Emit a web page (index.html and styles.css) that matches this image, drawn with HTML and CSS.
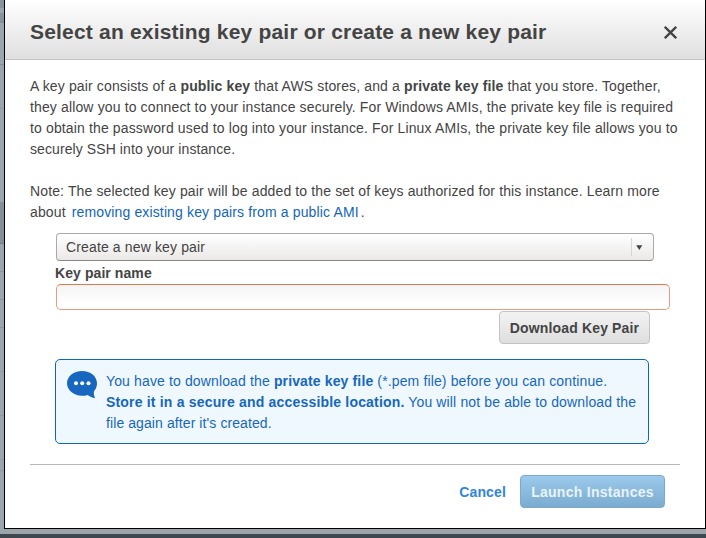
FILE: index.html
```html
<!DOCTYPE html>
<html lang="en">
<head>
<meta charset="utf-8">
<title>Key pair</title>
<link rel="stylesheet" href="styles.css">
</head>
<body>
<div class="modal">
  <header class="modal-header">
    <h1 class="title">Select an existing key pair or create a new key pair</h1>
    <svg class="close" width="13" height="13" viewBox="0 0 13 13"><path d="M.8 .8L12.2 12.2M12.2 .8L.8 12.2"/></svg>
  </header>
  <main class="modal-body">
    <p class="copy">
      <span class="line">A key pair consists of a <b>public key</b> that AWS stores, and a <b>private key file</b> that you store. Together,</span>
      <span class="line">they allow you to connect to your instance securely. For Windows AMIs, the private key file is required</span>
      <span class="line">to obtain the password used to log into your instance. For Linux AMIs, the private key file allows you to</span>
      <span class="line tight">securely SSH into your instance.</span>
    </p>
    <p class="copy">
      <span class="line">Note: The selected key pair will be added to the set of keys authorized for this instance. Learn more</span>
      <span class="line">about <a class="link">removing existing key pairs from a public AMI</a>.</span>
    </p>
    <div class="form">
      <div class="select">
        <span class="select-text">Create a new key pair</span>
        <span class="select-arrow"><svg width="7" height="5" viewBox="0 0 7 5"><path d="M.2 .2H6.3L3.25 4.9Z" fill="#444"/></svg></span>
      </div>
      <label class="label">Key pair name</label>
      <div class="input"></div>
      <div class="download-row"><button class="button">Download Key Pair</button></div>
      <div class="alert">
        <svg class="bubble" width="31" height="28" viewBox="0 0 31 28">
          <path fill="#1766bf" d="M15 0C23.500 0 30 5.300 30 12.200C30 15.200 29 18 27.100 20C26.400 22.500 27 24.800 28.200 27.200C25.200 26.600 22.700 25.400 20.600 23.900C18.900 24.500 17.100 24.800 15 24.800C6.800 24.800 0 19.200 0 12.300C0 5.300 6.800 0 15 0Z"/>
          <g fill="#fff"><circle cx="9" cy="12.300" r="2"/><circle cx="15.200" cy="12.300" r="2"/><circle cx="21.500" cy="12.300" r="2"/></g>
        </svg>
        <p class="alert-text">
          <span class="line">You have to download the <b>private key file</b> (*.pem file) before you can continue.</span>
          <span class="line"><b class="lead">Store it in a secure and accessible location.</b> You will not be able to download the</span>
          <span class="line tight">file again after it's created.</span>
        </p>
      </div>
    </div>
    <footer class="footer">
      <a class="cancel">Cancel</a>
      <button class="button primary">Launch Instances</button>
    </footer>
  </main>
</div>
</body>
</html>
```
FILE: styles.css
```css
* { box-sizing: border-box; }
body {
  margin: 0;
  height: 538px;
  overflow: hidden;
  padding: 0 0 0 4px;
  font: 14px/21px "Liberation Sans", Arial, sans-serif;
  letter-spacing: 0.135px;
  color: #444;
  background:
    linear-gradient(#3f464d, #3f464d) 0 534px / 706px 4px no-repeat,
    linear-gradient(#9ba3ab, #9ba3ab) 4px 529px / 702px 5px no-repeat,
    linear-gradient(
      #87949d 0 8px, #9ba5ad 8px 13px, #89939c 13px 22px, #808a93 22px 23px,
      #9ba5ad 23px 64px, #838e97 64px 65px, #9ba5ad 65px 108px, #929ca4 108px 109px,
      #9ba5ad 109px 202px, #858f97 202px 243px, #77818a 243px 244px,
      #9ba5ad 244px 271px, #8a949d 271px 272px, #9ba5ad 272px 299px, #8a949d 299px 300px,
      #9ba5ad 300px 327px, #8a949d 327px 328px, #9ba5ad 328px 371px, #8f99a2 371px 372px,
      #9ba5ad 372px 415px, #8f99a2 415px 416px, #9ba5ad 416px 459px, #8f99a2 459px 460px,
      #9ba5ad 460px 470px, #8f99a2 470px 471px, #9ba5ad 471px);
}
h1, p { margin: 0; }
.modal {
  width: 702px;
  height: 529px;
  background: #fff;
  border: 1px solid #000;
  border-top: 0;
}
.modal-header {
  display: flex;
  justify-content: space-between;
  align-items: center;
  height: 60px;
  padding: 4px 28px 0 25px;
  border-bottom: 1px solid #c4c4c4;
  background: linear-gradient(#fff, #dfdfdf);
}
.title { font-size: 21px; line-height: 24px; letter-spacing: 0.19px; white-space: nowrap; }
.close { stroke: #444; stroke-width: 2.300; fill: none; margin-top: 2px; }
.modal-body { padding: 16px 25px 0; }
.copy { margin-bottom: 21px; }
.copy + .copy { margin-bottom: 10px; }
.line { display: block; white-space: nowrap; }
.tight { letter-spacing: 0.09px; }
.link { color: #1166bb; margin: 0 2px; }
.form { padding-left: 25px; }
.select {
  display: flex;
  align-items: center;
  justify-content: space-between;
  width: 598px;
  height: 28px;
  margin-left: 1px;
  padding: 0 10px 0 9px;
  border: 1px solid #aaa;
  border-bottom-color: #888;
  border-radius: 4px;
  background: linear-gradient(#fff, #ebe9e8);
}
.select-arrow {
  display: flex;
  align-items: center;
  height: 18px;
  padding-left: 4px;
  border-left: 1px solid #d6d6d6;
}
.label { display: block; height: 23px; padding-top: 2px; font-weight: bold; letter-spacing: 0.08px; }
.input {
  width: 614px;
  height: 26px;
  margin-left: 1px;
  border: 1px solid #e59b80;
  border-top-color: #d97b52;
  border-radius: 5px;
  background: linear-gradient(#f4f4f4, #fff 75%);
}
.download-row { display: flex; justify-content: flex-end; padding: 1px 30px 0 0; }
.button {
  width: 151px;
  height: 33px;
  padding: 2px 0 0;
  font: bold 14px/21px "Liberation Sans", Arial, sans-serif;
  letter-spacing: 0.15px;
  white-space: nowrap;
  color: #444;
  border: 1px solid #c3c3c3;
  border-radius: 4px;
  background: linear-gradient(#f3f3f3, #dedede);
}
.alert {
  display: flex;
  width: 594px;
  height: 85px;
  margin-top: 15px;
  padding: 11px 0 0 11px;
  border: 1px solid #0e68b0;
  border-radius: 5px;
  background: #f0f8ff;
  color: #1667bd;
}
.lead { letter-spacing: 0.185px; }
.bubble { flex: none; margin-right: 8px; }
.footer {
  display: flex;
  justify-content: flex-end;
  align-items: center;
  gap: 14px;
  margin-top: 20px;
  padding: 10px 15px 0 0;
  border-top: 1px solid #b8b8b8;
}
.cancel { font-weight: bold; color: #3184dd; padding-top: 2px; }
.primary {
  width: 145px;
  letter-spacing: 0.28px;
  color: #e8f3fb;
  border-color: #79abd0;
  background: linear-gradient(#9bcaed, #7babce);
}
```
